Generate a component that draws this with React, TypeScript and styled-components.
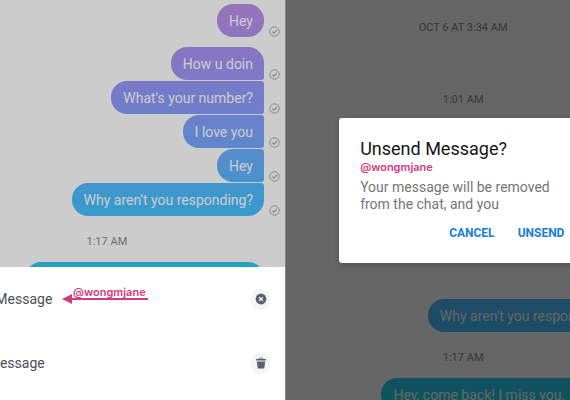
import React from "react";
import styled, { createGlobalStyle } from "styled-components";

const GlobalStyle = createGlobalStyle`
  * { box-sizing: border-box; }
  body { margin: 0; font-family: Roboto, "Liberation Sans", sans-serif; }
`;

const Page = styled.main`
  display: grid;
  grid-template-columns: 1fr 1fr;
  height: 100vh;
  overflow: hidden;
  background: #fff;
`;

const Pane = styled.section<{ $align: "start" | "end" }>`
  position: relative;
  display: flex;
  justify-content: ${(p) => (p.$align === "end" ? "flex-end" : "flex-start")};
  overflow: hidden;
  min-width: 0;
`;

const Screen = styled.div`
  flex: none;
  width: 125%;
`;

const Thread = styled.div<{ $top: number }>`
  display: flex;
  flex-direction: column;
  padding-top: ${(p) => p.$top}px;
`;

const Stamp = styled.time<{ $gap?: number }>`
  padding: 20px 0 14px;
  margin-bottom: ${(p) => p.$gap ?? 0}px;
  font-size: 11px;
  line-height: 12px;
  text-align: center;
  color: #8b8b8b;
`;

const Group = styled.div`
  display: flex;
  flex-direction: column;
  gap: 1px;
  margin-bottom: 10px;

  &:last-child,
  &:has(+ time) { margin-bottom: 0; }
`;

const Line = styled.div`
  display: flex;
  justify-content: flex-end;
  align-items: flex-end;
  gap: 5px;
  padding-right: 5px;
`;

const Bubble = styled.div<{ $from: string; $to: string; $wide?: boolean }>`
  width: ${(p) => (p.$wide ? "68%" : "auto")};
  padding: 8px 11px 7px 12px;
  border-radius: 16px 3px 3px 16px;
  background: linear-gradient(${(p) => p.$from}, ${(p) => p.$to});
  color: #fff;
  font-size: 14px;
  line-height: 18px;
  white-space: nowrap;

  ${Line}:first-child > & { border-top-right-radius: 16px; }
  ${Line}:last-child > & { border-bottom-right-radius: 16px; }
`;

const Shade = styled.div<{ $level: number }>`
  position: absolute;
  inset: 0;
  background: rgba(0, 0, 0, ${(p) => p.$level});
`;

const Divider = styled.div`
  position: absolute;
  inset: 0 auto 0 0;
  width: 1px;
  background: #858585;
`;

const Sheet = styled.div`
  position: absolute;
  right: 0;
  bottom: 0;
  width: 125%;
  padding-bottom: 5px;
  border-right: 1px solid #f8f8f8;
  background: #fff;
`;

const Option = styled.button`
  display: flex;
  align-items: center;
  width: 100%;
  height: 64px;
  padding: 0 13px 0 16px;
  border: 0;
  background: none;
  color: #4b4f59;
  font: 14px/18px Roboto, sans-serif;
  text-align: left;
`;

const OptionIcon = styled.span`
  display: grid;
  place-items: center;
  width: 21px;
  height: 21px;
  margin-left: auto;
  border-radius: 50%;
  background: #f4f5f6;
`;

const Handle = styled.span`
  display: block;
  color: #d33b7c;
  font: 600 11px/12px Inter, Arial, sans-serif;
`;

const Pointer = styled.span`
  display: grid;
  justify-items: center;
  width: 86px;
  margin-left: 10px;
  padding-bottom: 8px;

  > * { grid-column: 1; }
  > span { grid-row: 1; padding-left: 8px; }
  > svg { grid-row: 1; margin-top: 7px; }
`;

const Dialog = styled.div`
  position: absolute;
  top: 118px;
  left: 19%;
  width: 88%;
  padding: 19px 21px 21px;
  border-radius: 3px;
  background: #fff;
  box-shadow: 0 2px 6px rgba(0, 0, 0, 0.2);
`;

const Title = styled.h2`
  margin: 0;
  font-size: 18px;
  font-weight: 400;
  line-height: 24px;
  color: #151515;
`;

const Copy = styled.p`
  max-width: 208px;
  margin: 6px 0 0;
  font-size: 14px;
  line-height: 17px;
  color: #757575;
`;

const Actions = styled.div`
  display: flex;
  gap: 23px;
  padding: 11px 0 0 89px;
`;

const Action = styled.button`
  padding: 0;
  border: 0;
  background: none;
  color: #1380d8;
  font: 700 12px/18px Roboto, sans-serif;
`;

const Sent = () => (
  <svg width="11" height="11" viewBox="0 0 11 11" fill="none" stroke="#a3abb3">
    <circle cx="5.5" cy="5.5" r="4.7" />
    <path d="M3.2 5.6 4.9 7.2 7.9 4" strokeWidth="1.2" />
  </svg>
);

type Message = { text: string; from: string; to: string; wide?: boolean };

const opening: Message[] = [{ text: "Hey", from: "#bb90e8", to: "#b592ee" }];

const question: Message = { text: "Why aren't you responding?", from: "#52bbff", to: "#45c2ff" };

const followUps: Message[] = [
  { text: "How u doin", from: "#aa92f2", to: "#a297fa" },
  { text: "What's your number?", from: "#9a98fb", to: "#879fff" },
  { text: "I love you", from: "#86a0ff", to: "#76a9ff" },
  { text: "Hey", from: "#6cafff", to: "#5db7ff" },
  question,
];

const reply: Message = {
  text: "Hey, come back! I miss you.",
  from: "#30c9ee",
  to: "#1ad8ee",
  wide: true,
};

const Messages = ({ items }: { items: Message[] }) => (
  <Group>
    {items.map((m) => (
      <Line key={m.text}>
        <Bubble $from={m.from} $to={m.to} $wide={m.wide}>{m.text}</Bubble>
        <Sent />
      </Line>
    ))}
  </Group>
);

export default function App() {
  return (
    <>
      <GlobalStyle />
      <Page>
        <Pane $align="end">
          <Screen>
            <Thread $top={4}>
              <Messages items={opening} />
              <Messages items={followUps} />
              <Stamp>1:17 AM</Stamp>
              <Messages items={[{ ...reply, text: "\u00a0" }]} />
            </Thread>
          </Screen>
          <Shade $level={0.2} />
          <Sheet>
            <Option type="button">
              Unsend Message
              <Pointer>
                <Handle>@wongmjane</Handle>
                <svg width="86" height="12" viewBox="0 0 86 12" fill="#d33b7c">
                  <path d="M0 6 10 1V5H86V7H10V11Z" />
                </svg>
              </Pointer>
              <OptionIcon>
                <svg width="12" height="12" viewBox="0 0 12 12" fill="none">
                  <circle cx="6" cy="6" r="5.4" fill="#596070" />
                  <path d="m4.1 4.1 3.8 3.8m0-3.8L4.1 7.9" stroke="#fff" strokeWidth="1.3" />
                </svg>
              </OptionIcon>
            </Option>
            <Option type="button">
              Delete Message
              <OptionIcon>
                <svg width="12" height="12" viewBox="0 0 12 12" fill="#596070">
                  <path d="M1 3.6V2.5Q1 2 1.6 2H3.5Q4 .4 6 .4T8.5 2h1.9q.6 0 .6.5v1.1ZM4.6 2h2.8Q7 1.3 6 1.3T4.6 2Z" fillRule="evenodd" />
                  <path d="M1.8 4.4h8.4l-.8 6q-.1 1.2-1.2 1.2H3.8q-1.1 0-1.2-1.2Z" />
                </svg>
              </OptionIcon>
            </Option>
          </Sheet>
        </Pane>
        <Pane $align="start">
          <Screen>
            <Thread $top={2}>
              <Stamp $gap={26}>OCT 6 AT 3:34 AM</Stamp>
              <Stamp $gap={179}>1:01 AM</Stamp>
              <Messages items={[question]} />
              <Stamp>1:17 AM</Stamp>
              <Messages items={[reply]} />
            </Thread>
          </Screen>
          <Shade $level={0.6} />
          <Divider />
          <Dialog role="dialog" aria-labelledby="dialog-title">
            <Title id="dialog-title">Unsend Message?</Title>
            <Handle>@wongmjane</Handle>
            <Copy>Your message will be removed from the chat, and you</Copy>
            <Actions>
              <Action type="button">CANCEL</Action>
              <Action type="button">UNSEND</Action>
            </Actions>
          </Dialog>
        </Pane>
      </Page>
    </>
  );
}
